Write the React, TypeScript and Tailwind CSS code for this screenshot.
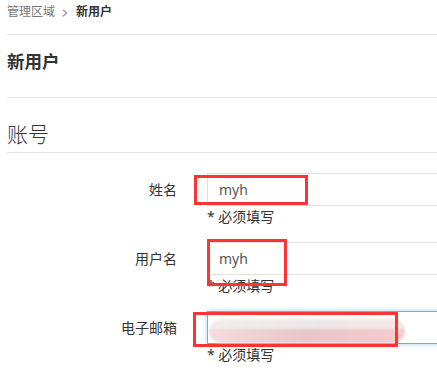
import React from 'react';

const fields = [
  { label: '姓名', value: 'myh', focused: false },
  { label: '用户名', value: 'myh', focused: false },
  { label: '电子邮箱', value: '', focused: true },
];

function BlurredEmail() {
  return (
    <div className="mt-[7px] h-[24px] w-[196px] rounded-full overflow-hidden blur-[1px] flex flex-col">
      <div className="h-[10px] bg-gradient-to-r from-[#f3eeee] via-[#ebe8e7] to-[#f6e6e6]" />
      <div className="flex-1 bg-gradient-to-r from-[#f4dcdd] via-[#e8c6c8] to-[#f6cccd]" />
    </div>
  );
}

export default function App() {
  return (
    <div
      className="relative w-[437px] h-[373px] overflow-hidden bg-white text-[#333]"
      style={{ fontFamily: '"Noto Sans", "Noto Sans CJK SC", sans-serif' }}
    >
      <div className="ml-[7px]">
        <div className="h-[35px] pt-[3px] border-b border-[#e5e5e5] flex items-start text-[12px] leading-[18px]">
          <span className="text-[#777]">管理区域</span>
          <svg className="ml-[7px] mr-[8px] mt-[6px]" width="6" height="8" viewBox="0 0 6 8">
            <path d="M1 0.8 L4.6 4 L1 7.2" fill="none" stroke="#999" strokeWidth="1.3" />
          </svg>
          <span className="font-bold text-[#333]">新用户</span>
        </div>

        <div className="h-[63px] pt-[14px] border-b border-[#e5e5e5]">
          <h1 className="text-[17.5px] leading-[24px] font-bold">新用户</h1>
        </div>

        <div className="h-[55px] pt-[22px] border-b border-[#e5e5e5]">
          <h2 className="text-[21px] leading-[28px] font-light">账号</h2>
        </div>

        <div className="pt-[20px] flex flex-col gap-[16px]">
          {fields.map((f) => (
            <div key={f.label} className="flex">
              <div className="w-[170px] shrink-0 h-[33px] flex items-center justify-end text-[14px]">
                {f.label}
              </div>
              <div className="ml-[30px] shrink-0 flex flex-col">
                <div
                  className={
                    f.focused
                      ? 'w-[260px] h-[33px] border border-[#66afe9] shadow-[0_0_5px_rgba(102,175,233,0.6)] pl-[1px]'
                      : 'w-[260px] h-[33px] border border-[#e0e0e0] pl-[11px] flex items-center text-[14px] text-[#555]'
                  }
                >
                  {f.focused ? <BlurredEmail /> : f.value}
                </div>
                <div className="mt-[2px] text-[14px] leading-[18px] text-[#333]">* 必须填写</div>
              </div>
            </div>
          ))}
        </div>
      </div>

      {/* red annotation boxes */}
      <div className="absolute left-[194px] top-[175px] w-[114px] h-[30px] border-[3px] border-[#f33]" />
      <div className="absolute left-[207px] top-[239px] w-[80px] h-[47px] border-[3px] border-[#f33]" />
      <div className="absolute left-[193px] top-[312px] w-[205px] h-[35px] border-[3px] border-[#f33]" />
    </div>
  );
}
